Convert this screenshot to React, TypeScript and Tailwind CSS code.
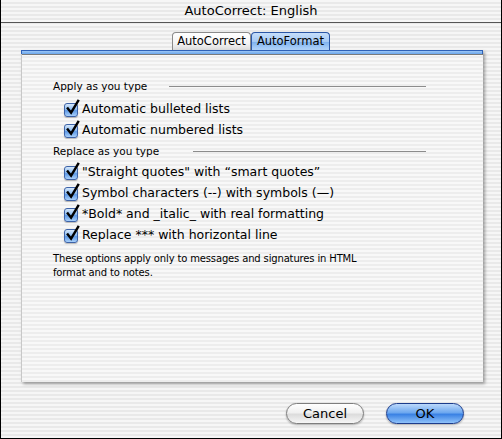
const stripes =
  "bg-[repeating-linear-gradient(180deg,#f6f6f6_0px,#f6f6f6_2px,#e9e9e9_2px,#e9e9e9_4px)]";

const Check = () => (
  <span className="relative w-[14px] h-[14px] shrink-0 rounded-[3px] border border-[#3d63a8] bg-[linear-gradient(180deg,#d6e8fb_0%,#8ebcf0_45%,#5f9ae6_55%,#a9d0fa_100%)] shadow-[0_1px_1px_rgba(0,0,0,0.25)]">
    <svg
      viewBox="0 0 16 18"
      className="absolute left-[0px] top-[-5px] w-[15px] h-[17px]"
    >
      <path
        d="M3 10 L6.5 14.5 L14 2"
        fill="none"
        stroke="#000"
        strokeWidth="2.6"
        strokeLinecap="square"
        strokeLinejoin="miter"
      />
    </svg>
  </span>
);

interface RowProps {
  label: string;
}

const Row = ({ label }: RowProps) => (
  <div className="h-[21px] flex items-center pl-[11px] gap-[4px]">
    <Check />
    <span className="text-[12.5px] text-black whitespace-nowrap">{label}</span>
  </div>
);

const Header = ({ title, width }: { title: string; width: string }) => (
  <div className="h-[14px] flex items-center">
    <span className={`${width} shrink-0 text-[10.5px] leading-[14px] text-black whitespace-nowrap`}>
      {title}
    </span>
    <div className="flex-1 h-px bg-[#8c8c8c]" />
  </div>
);

export default function App() {
  return (
    <div
      className={`w-[502px] h-[439px] flex flex-col border-x border-b border-black ${stripes} font-['Lucida_Grande','DejaVu_Sans',sans-serif] text-black`}
    >
      <div className="h-[23px] shrink-0 flex items-center justify-center border-b border-[#555] text-[13px] pb-px">
        AutoCorrect: English
      </div>

      <div className="mt-[9px] flex justify-center">
        <div className="w-[79px] h-[18px] flex items-center justify-center rounded-t-[4px] border border-b-0 border-[#8a8a8a] bg-[linear-gradient(180deg,#ffffff_0%,#f4f4f4_60%,#dcdcdc_100%)] text-[11.5px]">
          AutoCorrect
        </div>
        <div className="w-[79px] h-[18px] flex items-center justify-center rounded-t-[4px] border border-b-0 border-[#2b57a6] bg-[linear-gradient(180deg,#c6defa_0%,#a5c9f4_50%,#7fb2ee_55%,#b4d6fb_100%)] text-[11.5px]">
          AutoFormat
        </div>
      </div>

      <div className="ml-[20px] w-[462px] h-[332px] flex flex-col border-l border-[#c8c8c8] shadow-[2px_2px_3px_rgba(0,0,0,0.35)] bg-[repeating-linear-gradient(180deg,#f8f8f8_0px,#f8f8f8_2px,#ededed_2px,#ededed_4px)]">
        <div className="h-[4px] -ml-px w-[462px] border-t border-x border-[#2f62b8] bg-[linear-gradient(180deg,#9cc6f5,#6aa6ec)]" />
        <div className="h-px bg-[#7a7a7a]" />
        <div className="flex flex-col pl-[31px] pr-[57px] pt-[24px]">
          <Header title="Apply as you type" width="w-[116px]" />
          <div className="mt-[6px]">
            <Row label="Automatic bulleted lists" />
            <Row label="Automatic numbered lists" />
          </div>
          <div className="mt-[3px]">
            <Header title="Replace as you type" width="w-[140px]" />
          </div>
          <div className="mt-[4px]">
            <Row label={"\"Straight quotes\" with \u201Csmart quotes\u201D"} />
            <Row label={"Symbol characters (--) with symbols (\u2014)"} />
            <Row label="*Bold* and _italic_ with real formatting" />
            <Row label="Replace *** with horizontal line" />
          </div>
          <p className="mt-[6px] text-[10px] tracking-[-0.15px] leading-[14px] w-[310px]">
            These options apply only to messages and signatures in HTML format and to notes.
          </p>
        </div>
      </div>

      <div className="mt-[21px] flex justify-end gap-[22px] pr-[37px]">
        <button className="w-[78px] h-[21px] rounded-full border border-[#7d7d7d] bg-[linear-gradient(180deg,#ffffff_0%,#f0f0f0_45%,#dcdcdc_55%,#f6f6f6_100%)] text-[13px] shadow-[0_1px_2px_rgba(0,0,0,0.3)]">
          Cancel
        </button>
        <button className="w-[78px] h-[21px] rounded-full border border-[#1c3c8c] bg-[linear-gradient(180deg,#bcd9fb_0%,#6ea8ef_45%,#3b82e4_55%,#8fc2fa_100%)] text-[13px] shadow-[0_1px_2px_rgba(0,0,0,0.3)]">
          OK
        </button>
      </div>
    </div>
  );
}
